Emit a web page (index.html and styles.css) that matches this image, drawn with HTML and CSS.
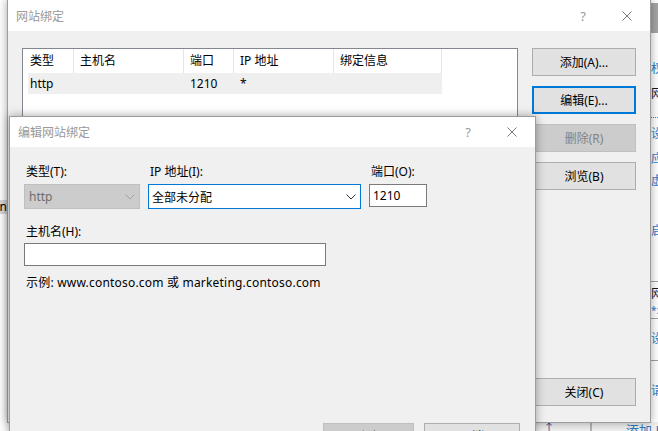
FILE: index.html
```html
<!DOCTYPE html>
<html lang="zh-CN">
<head>
    <meta charset="UTF-8">
    <title>编辑网站绑定</title>
    <link rel="stylesheet" href="styles.css">
</head>
<body>

<!-- windows behind the dialogs -->
<div class="app-left">
    <div class="tree-row"><span>Modern</span></div>
</div>

<div class="app-right">
    <div class="pane-head"></div>
    <div class="act act-1">权限</div>
    <div class="act act-dark act-2">网站</div>
    <div class="act-dots"></div>
    <div class="act act-3">设置</div>
    <div class="act act-4">应用</div>
    <div class="act act-5">虚拟</div>
    <div class="act act-6">启动</div>
    <div class="act-line act-7"></div>
    <div class="act act-dark">网站</div>
    <div class="act act-star">*:1210</div>
    <div class="act-line"></div>
    <div class="act act-8">设置</div>
    <div class="act-line act-9"></div>
    <div class="act act-10">请求</div>
</div>

<div class="app-bottom">
    <span class="up">↑</span>
    <span class="col-sep"></span>
    <span class="col-sep col-sep-2"></span>
    <span class="add-link">添加 FTP</span>
</div>

<!-- 网站绑定 -->
<div class="win win-bindings">
    <div class="title-bar">
        <span class="title">网站绑定</span>
        <span class="tb-help">?</span>
        <span class="tb-close">
            <svg width="10" height="10" viewBox="0 0 10 10"><path d="M0.5 0.5 L9.5 9.5 M9.5 0.5 L0.5 9.5" stroke="#777" stroke-width="1" fill="none"/></svg>
        </span>
    </div>
    <div class="bind-body">
        <div class="list">
            <div class="list-head">
                <div class="cell">类型</div>
                <div class="cell">主机名</div>
                <div class="cell">端口</div>
                <div class="cell">IP 地址</div>
                <div class="cell">绑定信息</div>
            </div>
            <div class="list-row selected">
                <div class="cell">http</div>
                <div class="cell"></div>
                <div class="cell">1210</div>
                <div class="cell">*</div>
                <div class="cell"></div>
            </div>
        </div>
        <div class="btn-col">
            <div class="btn">添加(A)...</div>
            <div class="btn btn-focus">编辑(E)...</div>
            <div class="btn btn-disabled">删除(R)</div>
            <div class="btn">浏览(B)</div>
            <div class="btn btn-close">关闭(C)</div>
        </div>
    </div>
</div>

<!-- 编辑网站绑定 -->
<div class="win win-edit">
    <div class="title-bar">
        <span class="title">编辑网站绑定</span>
        <span class="tb-help">?</span>
        <span class="tb-close">
            <svg width="10" height="10" viewBox="0 0 10 10"><path d="M0.5 0.5 L9.5 9.5 M9.5 0.5 L0.5 9.5" stroke="#777" stroke-width="1" fill="none"/></svg>
        </span>
    </div>
    <div class="edit-body">
        <div class="field-row">
            <div class="field f-type">
                <div class="label">类型(T):</div>
                <div class="select select-disabled">
                    <span>http</span>
                    <svg width="10" height="6" viewBox="0 0 10 6"><polyline points="0.5,0.5 5,5 9.5,0.5" stroke="#a2a2a2" stroke-width="1" fill="none"/></svg>
                </div>
            </div>
            <div class="field f-ip">
                <div class="label">IP 地址(I):</div>
                <div class="select select-focus">
                    <span>全部未分配</span>
                    <svg width="10" height="6" viewBox="0 0 10 6"><polyline points="0.5,0.5 5,5 9.5,0.5" stroke="#333" stroke-width="1" fill="none"/></svg>
                </div>
            </div>
            <div class="field f-port">
                <div class="label">端口(O):</div>
                <div class="textbox">1210</div>
            </div>
        </div>
        <div class="field f-host">
            <div class="label">主机名(H):</div>
            <div class="textbox"></div>
        </div>
        <div class="example">示例: www.contoso.com 或 marketing.contoso.com</div>
        <div class="edit-foot">
            <div class="btn btn-disabled btn-ok">确定</div>
            <div class="btn btn-cancel">取消</div>
        </div>
    </div>
</div>

</body>
</html>
```

FILE: styles.css
```css
* {
    box-sizing: border-box;
}

html, body {
    margin: 0;
    padding: 0;
    width: 658px;
    height: 431px;
    overflow: hidden;
}

body {
    position: relative;
    background: #fff;
    font-family: "Noto Sans", "Noto Sans CJK SC", sans-serif;
    font-size: 12px;
    color: #000;
}

/* background application */
.app-left {
    position: absolute;
    left: 0;
    top: 0;
    width: 7px;
    height: 431px;
    padding-top: 200px;
}

.tree-row {
    height: 14px;
    line-height: 14px;
    background: #d9d9d9;
    display: flex;
    justify-content: flex-end;
    overflow: hidden;
    white-space: nowrap;
}

.app-right {
    position: absolute;
    left: 600px;
    top: 0;
    width: 58px;
    height: 431px;
    background: #fff;
    padding-left: 51px;
    display: flex;
    flex-direction: column;
    overflow: hidden;
    white-space: nowrap;
    color: #2f79c3;
}

.pane-head {
    margin: 3px 0 0 -51px;
    height: 30px;
    width: 58px;
    background: #a5a5a5;
}

.act {
    line-height: 16px;
    height: 16px;
}

.act-dark { color: #1a1a1a; }
.act-1 { margin-top: 28px; }
.act-2 { margin-top: 9px; }
.act-3 { margin-top: 8px; }
.act-4 { margin-top: 9px; }
.act-5 { margin-top: 6px; }
.act-6 { margin-top: 34px; }
.act-8 { margin-top: 12px; }
.act-10 { margin-top: 22px; }
.act-star { font-size: 10px; }

.act-dots {
    margin-top: 15px;
    height: 1px;
    border-top: 1px dotted #3a7cc4;
}

.act-line {
    height: 1px;
    background: #a0a0a0;
    margin-left: -51px;
}

.act-7 { margin: 42px 0 4px -51px; }
.act-9 { margin-top: 13px; }

.app-bottom {
    position: absolute;
    left: 535px;
    top: 422px;
    width: 123px;
    height: 9px;
    background: #f0f0f0;
    display: flex;
    align-items: flex-start;
    overflow: hidden;
    white-space: nowrap;
}

.up {
    margin-left: 8px;
    color: #1c4f9c;
    line-height: 14px;
}

.col-sep {
    width: 1px;
    height: 9px;
    background: #b5b5b5;
    margin-left: 24px;
}

.col-sep-2 {
    margin-left: 11px;
    border-right: 1px solid #b5b5b5;
    width: 3px;
    background: none;
    border-left: 1px solid #b5b5b5;
}

.add-link {
    margin-left: 34px;
    color: #2f79c3;
    font-size: 13px;
    line-height: 16px;
}

/* windows */
.win {
    position: absolute;
    display: flex;
    flex-direction: column;
    background: #f0f0f0;
    border: 1px solid #9c9c9c;
    box-shadow: 0 0 9px rgba(0, 0, 0, 0.35);
}

.win-bindings {
    left: 7px;
    top: -1px;
    width: 644px;
    height: 424px;
}

.win-edit {
    left: 9px;
    top: 116px;
    width: 527px;
    height: 340px;
}

.title-bar {
    height: 31px;
    flex-shrink: 0;
    background: #fff;
    display: flex;
    align-items: center;
    color: #999;
}

.win-edit .title-bar {
    height: 30px;
}

.title {
    flex: 1;
    padding-left: 8px;
    font-size: 12px;
}

.tb-help {
    width: 42px;
    text-align: center;
    font-size: 13px;
    color: #9a9a9a;
}

.tb-close {
    width: 46px;
    display: flex;
    justify-content: center;
    align-items: center;
}

/* binding list */
.bind-body {
    flex: 1;
    display: flex;
    gap: 14px;
    padding: 17px 14px 16px 14px;
}

.list {
    width: 496px;
    height: 300px;
    background: #fff;
    border: 1px solid #828790;
    padding-left: 5px;
}

.list-head, .list-row {
    display: grid;
    grid-template-columns: 46px 110px 50px 100px 108px;
    width: 414px;
}

.list-head .cell {
    height: 24px;
    line-height: 24px;
    padding-left: 6px;
    border-right: 1px solid #e5e5e5;
}

.list-row .cell {
    height: 21px;
    line-height: 21px;
    padding-left: 6px;
}

.list-head .cell:first-child,
.list-row .cell:first-child {
    padding-left: 2px;
}

.list-row.selected {
    background: #efefef;
}

.btn-col {
    width: 104px;
    display: flex;
    flex-direction: column;
    gap: 10px;
}

.btn {
    height: 28px;
    background: #e1e1e1;
    border: 1px solid #adadad;
    display: flex;
    align-items: center;
    justify-content: center;
}

.btn-focus {
    border: 2px solid #0078d7;
}

.btn-disabled {
    background: #cccccc;
    border-color: #bfbfbf;
    color: #838383;
}

.btn-close {
    margin-top: auto;
}

/* edit dialog */
.edit-body {
    flex: 1;
    display: flex;
    flex-direction: column;
    padding: 17px 15px 6px 14px;
}

.field-row {
    display: flex;
    gap: 8px;
}

.label {
    line-height: 16px;
    padding-left: 2px;
    margin-bottom: 4px;
}

.f-type { width: 116px; }
.f-ip { width: 213px; }
.f-port { width: 58px; }

.select {
    height: 25px;
    border: 1px solid #7a7a7a;
    display: flex;
    align-items: center;
    justify-content: space-between;
    padding: 0 4px 0 4px;
}

.select-disabled {
    background: #cccccc;
    border-color: #bfbfbf;
    color: #6d6d6d;
}

.select-focus {
    background: #fff;
    border-color: #0078d7;
    padding-left: 3px;
}

.textbox {
    height: 23px;
    line-height: 21px;
    background: #fff;
    border: 1px solid #7a7a7a;
    padding: 0 3px;
}

.f-host {
    margin-top: 15px;
    width: 302px;
}

.f-host .label {
    margin-bottom: 3px;
}

.example {
    margin-top: 9px;
    line-height: 16px;
    padding-left: 2px;
    letter-spacing: 0.2px;
}

.edit-foot {
    margin-top: auto;
    display: flex;
    justify-content: flex-end;
    gap: 10px;
}

.edit-foot .btn {
    height: 26px;
}

.btn-ok { width: 91px; }
.btn-cancel { width: 96px; }
```
